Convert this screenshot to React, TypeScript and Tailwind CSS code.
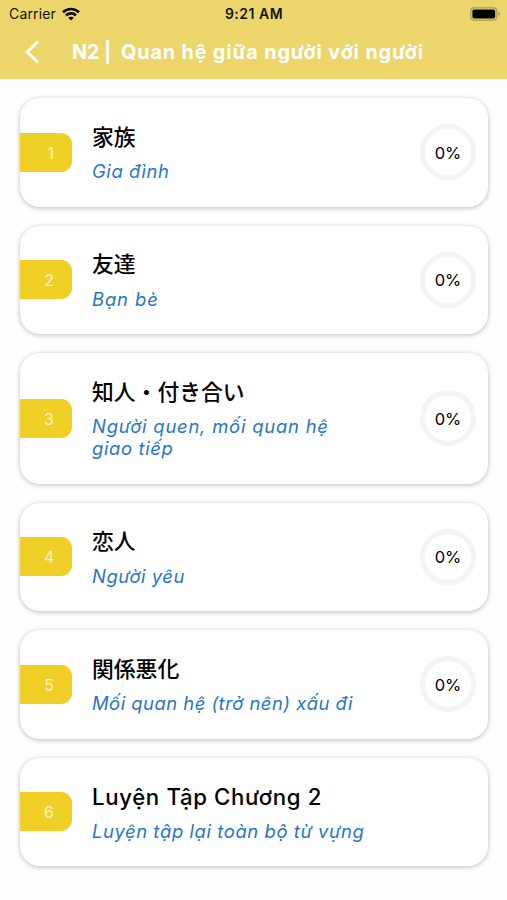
type Lesson = {
  id: number;
  title: string;
  titleStyle?: string;
  // one entry per line of the translation
  subtitle: { text: string; tracking: string }[];
  progress?: number;
};

const LESSONS: Lesson[] = [
  { id: 1, title: "家族", subtitle: [{ text: "Gia đình", tracking: "tracking-[0.6px]" }], progress: 0 },
  { id: 2, title: "友達", subtitle: [{ text: "Bạn bè", tracking: "tracking-[0.9px]" }], progress: 0 },
  {
    id: 3,
    title: "知人・付き合い",
    subtitle: [
      { text: "Người quen, mối quan hệ", tracking: "tracking-[0.8px]" },
      { text: "giao tiếp", tracking: "tracking-[0.65px]" },
    ],
    progress: 0,
  },
  { id: 4, title: "恋人", subtitle: [{ text: "Người yêu", tracking: "tracking-[0.55px]" }], progress: 0 },
  {
    id: 5,
    title: "関係悪化",
    subtitle: [{ text: "Mối quan hệ (trở nên) xấu đi", tracking: "tracking-[0.5px]" }],
    progress: 0,
  },
  {
    id: 6,
    title: "Luyện Tập Chương 2",
    titleStyle: "text-[22.2px] font-[450] tracking-[0.65px]",
    subtitle: [{ text: "Luyện tập lại toàn bộ từ vựng", tracking: "tracking-[0.58px]" }],
  },
];

function WifiIcon() {
  return (
    <svg width="18" height="14" viewBox="0 0 18 14" fill="none" stroke="#0c0b05" strokeWidth="2.6">
      <path d="M1 5.2C5.5.9 12.5.9 17 5.2" />
      <path d="M3.9 8.4c2.9-2.7 7.3-2.7 10.2 0" />
      <path d="M9 13.6 6.2 10.8c1.6-1.4 4-1.4 5.6 0z" fill="#0c0b05" stroke="none" />
    </svg>
  );
}

function BatteryIcon() {
  return (
    <svg width="31" height="14" viewBox="0 0 31 14">
      <rect x="0.8" y="0.8" width="26" height="12.4" rx="3.4" fill="none" stroke="#a89a4e" strokeWidth="1.2" />
      <rect x="2.4" y="2.4" width="22.8" height="9.2" rx="1.8" fill="#000" />
      <path d="M28.3 4.8c2.1.8 2.1 3.6 0 4.4z" fill="#a89a4e" />
    </svg>
  );
}

function Header() {
  return (
    <header className="h-[79px] bg-[#ecd66b]">
      <div className="grid h-[27px] grid-cols-[1fr_auto_1fr] items-center pl-[9px] pr-[6px] text-[14px] text-[#15130a]">
        <div className="flex items-center gap-[6px]">
          <span className="tracking-[0.15px]">Carrier</span>
          <WifiIcon />
        </div>
        <span className="-ml-[2px] font-semibold tracking-[0.5px]">9:21 AM</span>
        <div className="flex justify-end">
          <BatteryIcon />
        </div>
      </div>
      <div className="flex h-[50px] items-center pl-[24px] text-white">
        <svg width="16" height="24" viewBox="0 0 16 24" fill="none" stroke="currentColor" strokeWidth="3">
          <path d="M14 1.5 3.2 12 14 22.5" />
        </svg>
        <h1 className="ml-[32px] flex pt-px text-[19.8px] font-bold">
          <span className="w-[49px] tracking-[-0.1px]">N2 |</span>
          <span className="whitespace-nowrap tracking-[0.86px]">Quan hệ giữa người với người</span>
        </h1>
      </div>
    </header>
  );
}

function LessonCard({ lesson }: { lesson: Lesson }) {
  return (
    <li className="flex items-center overflow-hidden rounded-[20px] bg-white pr-[12px] shadow-[0_1px_5px_rgba(0,0,0,0.27)]">
      <div className="flex h-[39px] w-[52px] shrink-0 items-center justify-end rounded-r-[11px] bg-[#f0cf27] pr-[18px] pt-px text-[16px] text-[#fdf6d0]">
        {lesson.id}
      </div>
      <div className="ml-[20px] flex-1 pb-[24.5px] pt-[25.5px]">
        <h2
          className={`h-[27px] whitespace-nowrap leading-[27px] text-black ${lesson.titleStyle ?? "text-[21.8px] font-medium"}`}
        >
          {lesson.title}
        </h2>
        <p className="mt-[9.5px] text-[18.4px] italic leading-[22px] text-[#2676c8]">
          {lesson.subtitle.map((line) => (
            <span key={line.text} className={`block whitespace-nowrap ${line.tracking}`}>
              {line.text}
            </span>
          ))}
        </p>
      </div>
      {lesson.progress !== undefined && (
        <div className="flex size-[56px] shrink-0 items-center justify-center rounded-full border-[5px] border-[#f4f4f4] pt-[2px] text-[16.5px] text-black">
          {lesson.progress}%
        </div>
      )}
    </li>
  );
}

export default function App() {
  return (
    <div className="h-[900px] w-[507px] overflow-hidden bg-[#fefefe] font-[Inter,'Noto_Sans_CJK_JP',sans-serif]">
      <Header />
      <ul className="flex flex-col gap-[19px] pl-[20px] pr-[19px] pt-[19px]">
        {LESSONS.map((lesson) => (
          <LessonCard key={lesson.id} lesson={lesson} />
        ))}
      </ul>
    </div>
  );
}
